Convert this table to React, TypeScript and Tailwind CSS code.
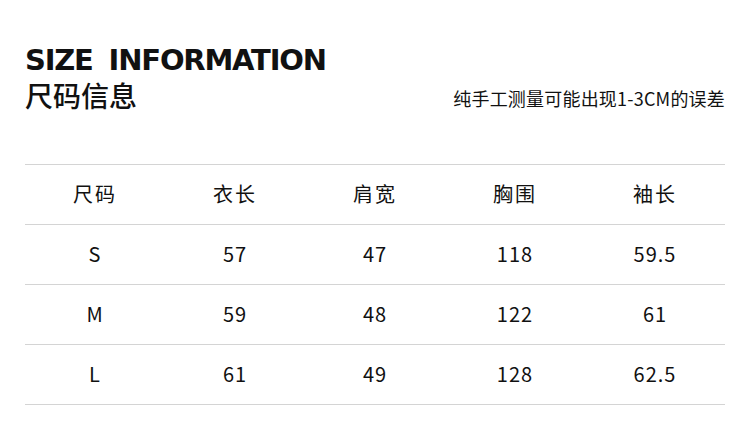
import React from "react";

const headers = ["尺码", "衣长", "肩宽", "胸围", "袖长"];
const rows = [
  ["S", "57", "47", "118", "59.5"],
  ["M", "59", "48", "122", "61"],
  ["L", "61", "49", "128", "62.5"],
];

export default function App() {
  return (
    <div
      className="w-[750px] h-[446px] bg-white text-[#111] px-[25px] pt-[45px]"
      style={{ fontFamily: '"Noto Sans CJK SC", "Noto Sans", sans-serif' }}
    >
      <div className="flex items-end justify-between">
        <div>
          <div
            className="text-[29px] leading-[30px] font-black tracking-[-1.2px] [word-spacing:7px]"
            style={{ fontFamily: '"DejaVu Sans", sans-serif' }}
          >
            SIZE INFORMATION
          </div>
          <div className="text-[28px] leading-[36px] mt-[2px] font-medium">尺码信息</div>
        </div>
        <div className="text-[18px] leading-[24px] mb-[3px] tracking-[0.2px]">纯手工测量可能出现1-3CM的误差</div>
      </div>
      <div className="mt-[51px] border-t border-[#d4d4d4]">
        <div className="grid grid-cols-5 h-[60px] pb-[2px] border-b border-[#d4d4d4] items-center text-center text-[20px]">
          {headers.map((h) => (
            <div key={h} className="tracking-[2px]">{h}</div>
          ))}
        </div>
        {rows.map((r) => (
          <div
            key={r[0]}
            className="grid grid-cols-5 h-[60px] pb-[2px] border-b border-[#d4d4d4] items-center text-center text-[20px] tracking-[1px]"
          >
            {r.map((c, i) => (
              <div key={i}>{c}</div>
            ))}
          </div>
        ))}
      </div>
    </div>
  );
}
